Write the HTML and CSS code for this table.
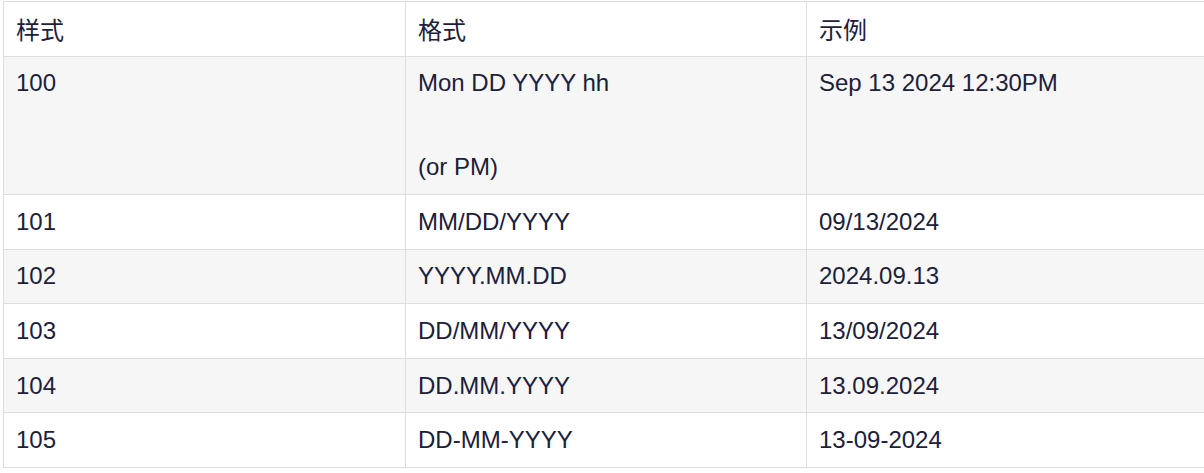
FILE: index.html
```html
<!DOCTYPE html>
<html lang="zh">
<head>
<meta charset="utf-8">
<link rel="stylesheet" href="styles.css">
</head>
<body>
<table class="fmt-table">
  <colgroup><col class="c1"><col class="c2"><col class="c3"></colgroup>
  <thead>
    <tr><th>样式</th><th>格式</th><th>示例</th></tr>
  </thead>
  <tbody>
    <tr><td>100</td><td>Mon DD YYYY hh<br><br><br>(or PM)</td><td>Sep 13 2024 12:30PM</td></tr>
    <tr><td>101</td><td>MM/DD/YYYY</td><td>09/13/2024</td></tr>
    <tr><td>102</td><td>YYYY.MM.DD</td><td>2024.09.13</td></tr>
    <tr><td>103</td><td>DD/MM/YYYY</td><td>13/09/2024</td></tr>
    <tr><td>104</td><td>DD.MM.YYYY</td><td>13.09.2024</td></tr>
    <tr><td>105</td><td>DD-MM-YYYY</td><td>13-09-2024</td></tr>
  </tbody>
</table>
</body>
</html>
```
FILE: styles.css
```css
html, body {
  margin: 0;
  padding: 0;
  background: #ffffff;
  overflow: hidden;
}
body {
  padding: 1px 0 0 3px;
  font-family: "Liberation Sans", Arial, "Noto Sans CJK SC", sans-serif;
  font-size: 24px;
  color: #1c2039;
}
.fmt-table {
  border-collapse: collapse;
  table-layout: fixed;
  width: 1206px;
}
.c1 { width: 402px; }
.c2 { width: 401px; }
.c3 { width: 403px; }
.fmt-table th,
.fmt-table td {
  border: 1px solid #dddddd;
  padding: 12.85px 12px;
  line-height: 27.9px;
  text-align: left;
  vertical-align: top;
  font-weight: normal;
}
.fmt-table th {
  font-family: "Noto Sans CJK SC", "Liberation Sans", sans-serif;
  background: #ffffff;
}
.fmt-table tbody tr:nth-child(odd) td {
  background: #f6f6f6;
}
.fmt-table tbody tr:nth-child(even) td {
  background: #ffffff;
}
```
